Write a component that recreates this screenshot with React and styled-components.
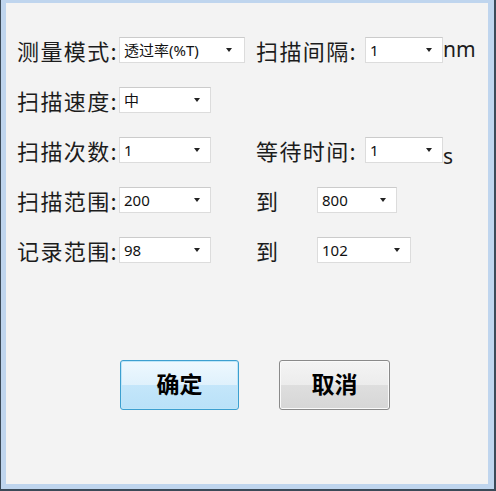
import React from 'react';
import styled, { createGlobalStyle } from 'styled-components';

const GlobalStyle = createGlobalStyle`
  html, body {
    margin: 0;
    padding: 0;
    background: #f3f3f3;
  }
`;

const rows = [
  {
    left: { label: '测量模式:', value: '透过率(%T)', width: 126, arrowGap: 12 },
    right: { label: '扫描间隔:', labelWidth: 109, value: '1', width: 78, unit: 'nm' },
  },
  {
    left: { label: '扫描速度:', value: '中', width: 92 },
  },
  {
    left: { label: '扫描次数:', value: '1', width: 92 },
    right: { label: '等待时间:', labelWidth: 109, value: '1', width: 78, unit: 's', low: true },
  },
  {
    left: { label: '扫描范围:', value: '200', width: 92 },
    right: { label: '到', labelWidth: 61, value: '800', width: 80 },
  },
  {
    left: { label: '记录范围:', value: '98', width: 92 },
    right: { label: '到', labelWidth: 61, value: '102', width: 94 },
  },
];

const DropDown = ({ value, width, arrowGap = 10 }) => (
  <SElect $width={width} $arrowGap={arrowGap}>
    <SElectText>{value}</SElectText>
    <ARrow />
  </SElect>
);

export default function App() {
  return (
    <>
      <GlobalStyle />
      <WIndow>
        <PAnel>
          <FOrm>
            {rows.map((row, i) => (
              <ROw key={i}>
                <LEftField>
                  <LAbel $width={102}>{row.left.label}</LAbel>
                  <DropDown value={row.left.value} width={row.left.width} arrowGap={row.left.arrowGap} />
                </LEftField>
                {row.right && (
                  <RIghtField>
                    <LAbel $width={row.right.labelWidth}>{row.right.label}</LAbel>
                    <DropDown value={row.right.value} width={row.right.width} />
                    {row.right.unit && <UNit $low={row.right.low}>{row.right.unit}</UNit>}
                  </RIghtField>
                )}
              </ROw>
            ))}
          </FOrm>
          <BUttonBar>
            <BUtton $primary>确定</BUtton>
            <BUtton>取消</BUtton>
          </BUttonBar>
        </PAnel>
      </WIndow>
    </>
  );
}

const WIndow = styled.div`
  box-sizing: border-box;
  width: 496px;
  height: 491px;
  border-style: solid;
  border-color: #3b4a58;
  border-width: 0 2px 2px 1px;
  font-family: "Noto Sans", "Noto Sans CJK SC", sans-serif;
  color: #1c1c1c;
`;

const PAnel = styled.div`
  box-sizing: border-box;
  height: 100%;
  background: #f3f3f3;
  border-style: solid;
  border-color: #bfd5ee;
  border-width: 3px 6px 5px 5px;
  display: flex;
  flex-direction: column;
`;

const FOrm = styled.div`
  display: flex;
  flex-direction: column;
  gap: 24px;
  padding: 34px 0 0 11px;
`;

const ROw = styled.div`
  display: flex;
  align-items: center;
  height: 26px;
`;

const LEftField = styled.div`
  display: flex;
  align-items: center;
  width: 239px;
`;

const RIghtField = styled.div`
  display: flex;
  align-items: center;
`;

const LAbel = styled.span`
  width: ${(p) => p.$width}px;
  font-family: "Noto Sans CJK SC", sans-serif;
  font-size: 22px;
  line-height: 26px;
  letter-spacing: 1.4px;
  white-space: nowrap;
`;

const SElect = styled.div`
  box-sizing: border-box;
  width: ${(p) => p.$width}px;
  height: 26px;
  background: #ffffff;
  border: 1px solid #dcdcdc;
  border-top-color: #cbcbcb;
  display: flex;
  align-items: center;
  justify-content: space-between;
  padding: 0 ${(p) => p.$arrowGap}px 0 4px;
`;

const SElectText = styled.span`
  font-family: "Noto Sans", "Noto Sans CJK SC", sans-serif;
  font-size: 15px;
  line-height: 20px;
  color: #111;
  white-space: nowrap;
`;

const ARrow = styled.span`
  width: 0;
  height: 0;
  border-left: 3.5px solid transparent;
  border-right: 3.5px solid transparent;
  border-top: 4px solid #222;
`;

const UNit = styled.span`
  font-family: "Noto Sans", sans-serif;
  font-size: 21px;
  line-height: 26px;
  position: relative;
  top: ${(p) => (p.$low ? 6 : -1)}px;
`;

const BUttonBar = styled.div`
  display: flex;
  gap: 40px;
  padding: 97px 0 0 114px;
`;

const BUtton = styled.button`
  box-sizing: border-box;
  width: ${(p) => (p.$primary ? 119 : 111)}px;
  height: 50px;
  border-radius: 3px;
  border: 1px solid ${(p) => (p.$primary ? '#3c9fd0' : '#8a8a8a')};
  background: ${(p) =>
    p.$primary
      ? 'linear-gradient(#eef8fe 0%, #dff1fc 50%, #c4e6fa 51%, #b9e1f8 100%)'
      : 'linear-gradient(#f4f4f4 0%, #ececec 50%, #dedede 51%, #d6d6d6 100%)'};
  box-shadow: inset 0 0 0 1px ${(p) => (p.$primary ? '#bfe6f8' : '#fafafa')};
  font-family: "Noto Sans CJK SC", sans-serif;
  font-size: 23px;
  line-height: 30px;
  font-weight: bold;
  color: #000;
  padding: 0 0 4px;
  cursor: pointer;
`;
